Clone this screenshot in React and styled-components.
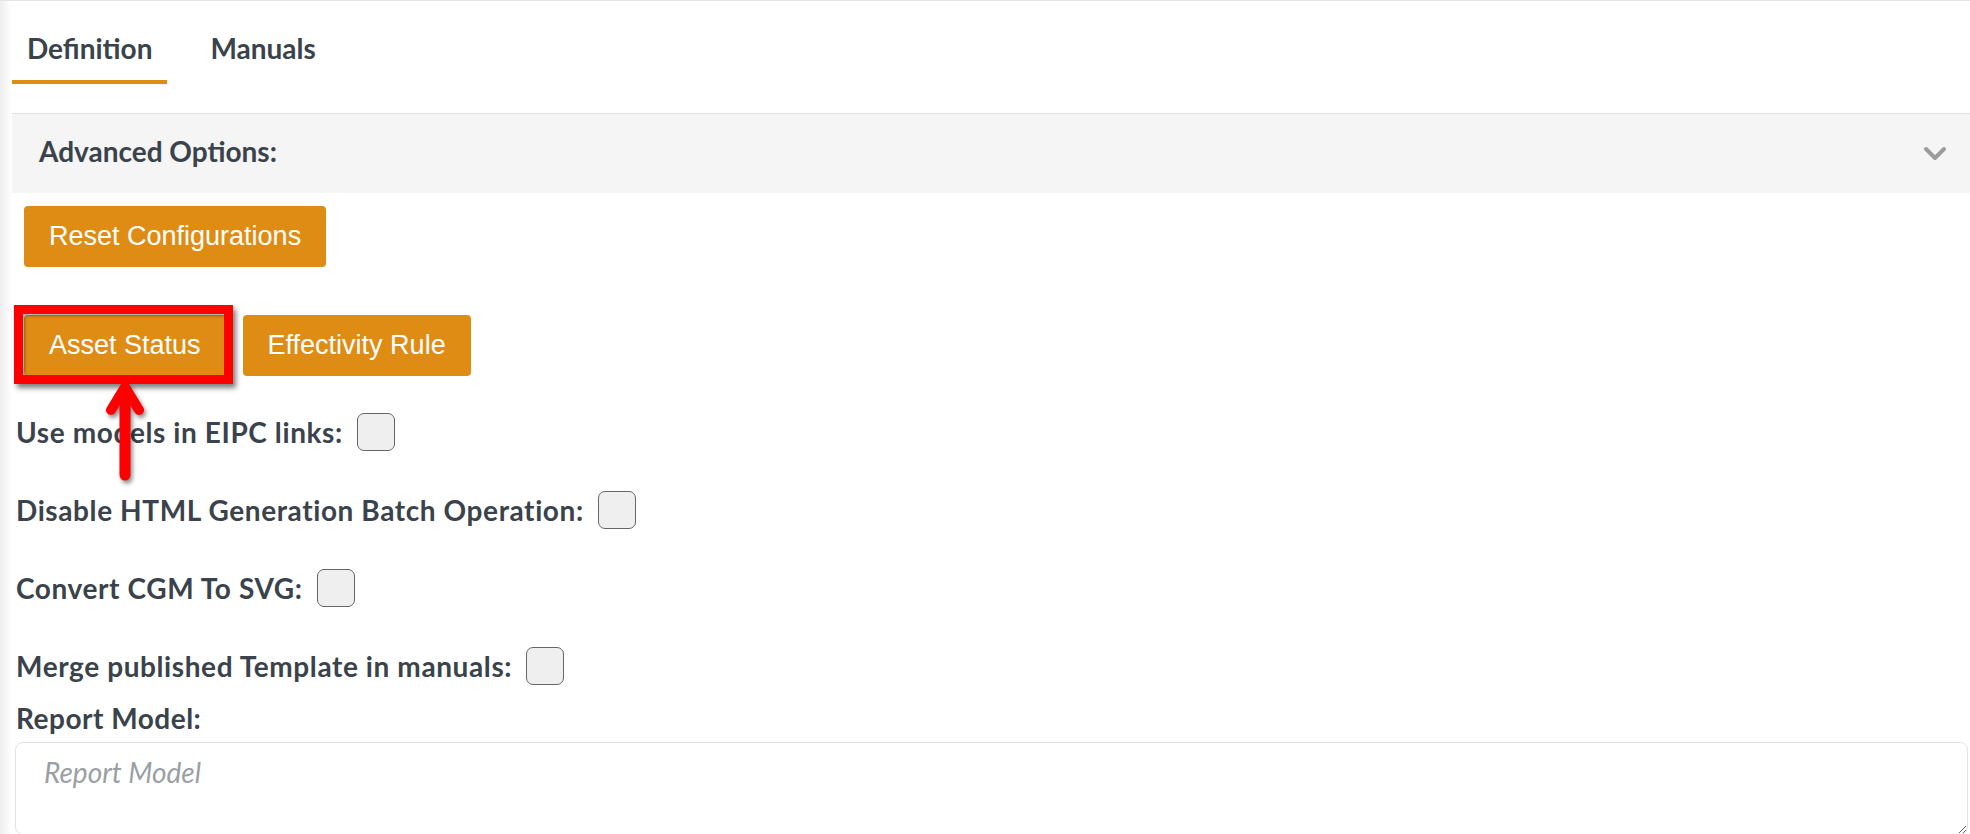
import React from "react";
import styled, { createGlobalStyle } from "styled-components";

//global styles
const GlobalStyle = createGlobalStyle`
  html, body {
    margin: 0;
    padding: 0;
    background: #fff;
  }
  body {
    font-family: Lato, "Noto Sans", sans-serif;
    color: #3a434b;
  }
  * {
    box-sizing: border-box;
  }
`;

const ORANGE = "#df8c15";

//styled components
const Page = styled.div`
  border-top: 1px solid #e4e4e4;
  padding-left: 12px;
  min-height: 833px;
  background: linear-gradient(to right, #eeeeee 0, #f8f8f8 7px, #fff 12px);
`;

const TabBar = styled.div`
  display: flex;
  gap: 28px;
  height: 112px;
`;

const Tab = styled.div`
  padding: 30px 15px 15px;
  font-size: 28px;
  line-height: 34px;
  font-weight: 700;
  align-self: flex-start;
  border-bottom: 4px solid ${props => (props.active ? ORANGE : "transparent")};
  cursor: pointer;
`;

const AccordionHeader = styled.div`
  height: 80px;
  border-top: 1px solid #e2e2e2;
  background: #f5f5f5;
  display: flex;
  align-items: center;
  justify-content: space-between;
  padding: 0 23px 0 27px;
  h3 {
    margin: 0 0 5px;
    font-size: 28px;
    line-height: 34px;
    font-weight: 700;
  }
`;

const Body = styled.div`
  padding: 13px 0 0 4px;
`;

const Button = styled.button`
  height: 61px;
  padding: 0 25px;
  border: none;
  border-radius: 4px;
  background: ${ORANGE};
  color: #fff;
  font-family: "Liberation Sans", Arial, sans-serif;
  font-size: 27px;
  cursor: pointer;
  margin-left: ${props => props.offset || 0}px;
`;

const ButtonRow = styled.div`
  display: flex;
  gap: 17px;
  margin: 48px 0 0 8px;
`;

const Annotated = styled.div`
  position: relative;
  display: flex;
`;

const Highlight = styled.span`
  position: absolute;
  top: -10px;
  left: -10px;
  right: -7px;
  bottom: -8px;
  border: 9px solid #ff0000;
  box-shadow: 3px 4px 5px rgba(0, 0, 0, 0.5), inset 2px 2px 3px rgba(0, 0, 0, 0.35);
  pointer-events: none;
  z-index: 2;
`;

const Arrow = styled.svg`
  position: absolute;
  left: 80px;
  top: 66px;
  width: 42px;
  height: 100px;
  filter: drop-shadow(2px 3px 2px rgba(0, 0, 0, 0.45));
  pointer-events: none;
  z-index: 3;
`;

const OptionRow = styled.label`
  display: flex;
  align-items: center;
  gap: 14px;
  height: 38px;
  margin-top: ${props => (props.first ? 37 : 40)}px;
  font-size: 28px;
  line-height: 34px;
  font-weight: 700;
  letter-spacing: 0.6px;
`;

const Checkbox = styled.input.attrs({ type: "checkbox" })`
  appearance: none;
  width: 38px;
  height: 38px;
  margin: 0;
  background: #efefef;
  border: 1.5px solid #666;
  border-radius: 7px;
`;

const FieldLabel = styled.div`
  margin-top: 16px;
  font-size: 28px;
  line-height: 34px;
  font-weight: 700;
  letter-spacing: 0.5px;
`;

const TextArea = styled.textarea`
  display: block;
  width: calc(100% - 1px);
  height: 93px;
  margin: 7px 0 0 -1px;
  padding: 12px 28px;
  border: 1px solid #e3e3e3;
  border-radius: 8px;
  font-family: Lato, "Noto Sans", sans-serif;
  font-style: italic;
  font-size: 28px;
  line-height: 34px;
  color: #3a434b;
  resize: vertical;
  outline: none;
  &::placeholder {
    color: #9a9fa4;
  }
`;

const options = [
    "Use models in EIPC links:",
    "Disable HTML Generation Batch Operation:",
    "Convert CGM To SVG:",
    "Merge published Template in manuals:",
];

//component
const App = () => {
    return (
        <>
            <GlobalStyle />
            <Page>
                <TabBar>
                    <Tab active>Definition</Tab>
                    <Tab>Manuals</Tab>
                </TabBar>

                <AccordionHeader>
                    <h3>Advanced Options:</h3>
                    <svg width="24" height="16" viewBox="0 0 24 16">
                        <polyline points="3,3 12,12 21,3" fill="none" stroke="#9b9b9b" strokeWidth="4" strokeLinecap="round" strokeLinejoin="round" />
                    </svg>
                </AccordionHeader>

                <Body>
                    <Button offset={8}>Reset Configurations</Button>

                    <ButtonRow>
                        <Annotated>
                            <Button>Asset Status</Button>
                            <Highlight />
                            <Arrow viewBox="0 0 42 100">
                                <polyline points="21,8 21,94" fill="none" stroke="#ff0000" strokeWidth="11" strokeLinecap="round" />
                                <polyline points="7,29 21,6 35,29" fill="none" stroke="#ff0000" strokeWidth="10" strokeLinecap="round" strokeLinejoin="round" />
                            </Arrow>
                        </Annotated>
                        <Button>Effectivity Rule</Button>
                    </ButtonRow>

                    {options.map((text, i) => (
                        <OptionRow key={text} first={i === 0}>
                            {text}
                            <Checkbox />
                        </OptionRow>
                    ))}

                    <FieldLabel>Report Model:</FieldLabel>
                    <TextArea placeholder="Report Model" />
                </Body>
            </Page>
        </>
    );
};

export default App;
